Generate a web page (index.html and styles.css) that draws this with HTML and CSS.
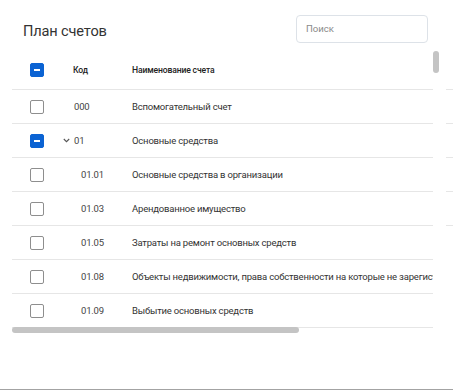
FILE: index.html
```html
<!DOCTYPE html>
<html lang="ru">
<head>
<meta charset="utf-8">
<link rel="stylesheet" href="styles.css">
</head>
<body>
<div class="page">
  <div class="top">
    <h1 class="title">План счетов</h1>
    <div class="search">Поиск</div>
  </div>
  <div class="main">
    <div class="viewport">
      <div class="table">
        <div class="row head">
          <div class="c-check"><span class="cb ind"></span></div>
          <div class="c-code hc">Код</div>
          <div class="c-name">Наименование счета</div>
        </div>
        <div class="row">
          <div class="c-check"><span class="cb"></span></div>
          <div class="c-code l0">000</div>
          <div class="c-name">Вспомогательный счет</div>
        </div>
        <div class="row">
          <div class="c-check"><span class="cb ind"></span></div>
          <div class="c-code lx"><svg class="chev" width="7" height="5" viewBox="0 0 7 5"><polyline points="0.8,1 3.5,3.7 6.2,1" fill="none" stroke="#555" stroke-width="1.1"/></svg>01</div>
          <div class="c-name">Основные средства</div>
        </div>
        <div class="row">
          <div class="c-check"><span class="cb"></span></div>
          <div class="c-code l1">01.01</div>
          <div class="c-name">Основные средства в организации</div>
        </div>
        <div class="row">
          <div class="c-check"><span class="cb"></span></div>
          <div class="c-code l1">01.03</div>
          <div class="c-name">Арендованное имущество</div>
        </div>
        <div class="row">
          <div class="c-check"><span class="cb"></span></div>
          <div class="c-code l1">01.05</div>
          <div class="c-name">Затраты на ремонт основных средств</div>
        </div>
        <div class="row">
          <div class="c-check"><span class="cb"></span></div>
          <div class="c-code l1">01.08</div>
          <div class="c-name">Объекты недвижимости, права собственности на которые не зарегистрированы</div>
        </div>
        <div class="row">
          <div class="c-check"><span class="cb"></span></div>
          <div class="c-code l1">01.09</div>
          <div class="c-name">Выбытие основных средств</div>
        </div>
      </div>
      <div class="hthumb"></div>
    </div>
    <div class="vtrack"><div class="vthumb"></div></div>
    <div class="side">
      <div class="s-head"></div>
      <div class="s-row"></div>
      <div class="s-row"></div>
      <div class="s-row"></div>
      <div class="s-row"></div>
    </div>
  </div>
</div>
</body>
</html>
```
FILE: styles.css
```css
html, body {
  margin: 0;
  padding: 0;
  background: #fff;
}
body {
  font-family: Roboto, "Noto Sans", "DejaVu Sans", sans-serif;
  color: #333;
}
.page {
  width: 453px;
  height: 390px;
  box-sizing: border-box;
  border-bottom: 1px solid #a3a3a3;
  overflow: hidden;
}
.top {
  display: flex;
  justify-content: space-between;
  align-items: center;
  padding: 15px 25px 0 23px;
}
.title {
  margin: 0;
  font-size: 14.6px;
  letter-spacing: -0.15px;
  font-weight: 400;
  color: #333;
  line-height: 28px;
  position: relative;
  top: 2px;
}
.search {
  width: 132px;
  height: 28px;
  box-sizing: border-box;
  border: 1px solid #dde2e8;
  border-radius: 4px;
  padding-left: 9px;
  font-size: 9.6px;
  line-height: 26px;
  color: #8a8a8a;
}
.main {
  display: flex;
  margin-top: 8px;
  margin-left: 12px;
}
.viewport {
  width: 421px;
  height: 282px;
  overflow: hidden;
  position: relative;
}
.table {
  width: 760px;
}
.row {
  display: grid;
  grid-template-columns: 50px 70px 1fr;
  align-items: center;
  height: 33px;
  border-bottom: 1px solid #e6e6e6;
  white-space: nowrap;
  font-size: 9.5px;
  letter-spacing: -0.2px;
}
.row.head {
  height: 38px;
  font-size: 8.6px;
  letter-spacing: -0.15px;
  font-weight: 500;
  color: #222;
}
.c-check {
  display: flex;
  align-items: center;
  padding-left: 18px;
}
.cb {
  display: block;
  width: 14px;
  height: 14px;
  box-sizing: border-box;
  border: 1px solid #8e8e8e;
  border-radius: 2px;
  background: #fff;
  position: relative;
}
.cb.ind {
  background: #0b63d3;
  border-color: #0b63d3;
}
.cb.ind::after {
  content: "";
  position: absolute;
  left: 3px;
  top: 5px;
  width: 6px;
  height: 2px;
  background: #fff;
}
.c-code {
  color: #444;
  display: flex;
  align-items: center;
}
.hc { padding-left: 11px; color: #222; }
.l0 { padding-left: 12px; }
.lx { padding-left: 1px; }
.l1 { padding-left: 19px; }
.chev {
  margin-right: 4px;
}
.c-name {
  color: #333;
}
.head .c-name { color: #222; }
.hthumb {
  position: absolute;
  left: 0;
  bottom: 0;
  width: 287px;
  height: 6px;
  border-radius: 3px;
  background: #c4c4c4;
}
.vtrack {
  width: 13px;
}
.vthumb {
  width: 6px;
  height: 22px;
  border-radius: 3px;
  background: #c4c4c4;
}
.side {
  width: 7px;
}
.s-head {
  height: 38px;
  border-bottom: 1px solid #e6e6e6;
}
.s-row {
  height: 33px;
  border-bottom: 1px solid #e6e6e6;
}
```
